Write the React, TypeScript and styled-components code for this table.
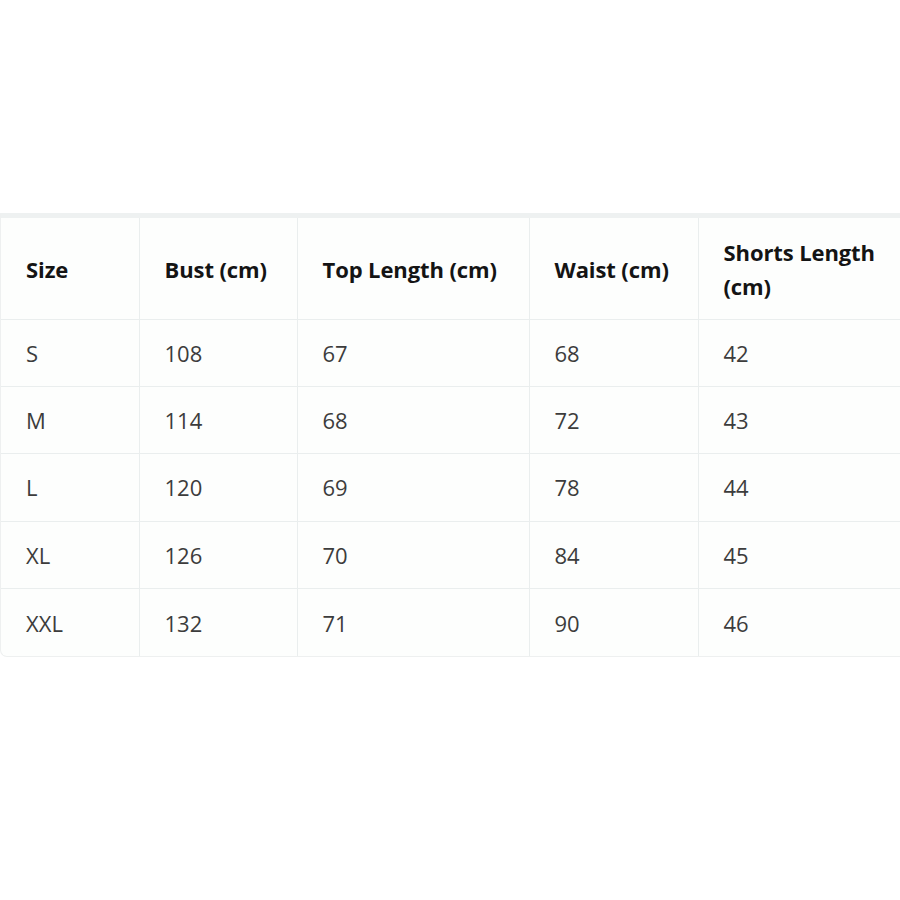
import React from "react";
import styled, { createGlobalStyle } from "styled-components";

const Global = createGlobalStyle`
  html, body {
    margin: 0;
    padding: 0;
    background: #ffffff;
    overflow: hidden;
    width: 900px;
    height: 900px;
  }
  body {
    font-family: "Open Sans", "Noto Sans", sans-serif;
  }
`;

const Page = styled.div`
  width: 900px;
  height: 900px;
  overflow: hidden;
  padding-top: 213px;
  box-sizing: border-box;
`;

const Frame = styled.div`
  width: 920px;
  border-top: 5px solid #eef1f1;
  border-left: 1px solid #eef0f0;
  border-bottom: 1px solid #eef0f0;
  border-radius: 0 0 0 7px;
  overflow: hidden;
  background: #fdfefd;
`;

const Table = styled.table`
  width: 919px;
  border-collapse: collapse;
  table-layout: fixed;
`;

const Col = styled.col<{ $w: number }>`
  width: ${(p) => p.$w}px;
`;

const HeadRow = styled.tr`
  height: 101px;
`;

const BodyRow = styled.tr`
  height: 67.4px;
`;

const Th = styled.th`
  text-align: left;
  vertical-align: middle;
  padding: 1px 10px 0 25px;
  font-size: 22px;
  font-weight: 700;
  line-height: 34px;
  letter-spacing: -0.1px;
  color: #141414;
  border-right: 1px solid #eaeeee;
  border-bottom: 1px solid #eaeeee;
  &:last-child {
    border-right: none;
    padding-right: 30px;
  }
`;

const Td = styled.td`
  padding: 0 10px 0 25px;
  font-size: 22px;
  font-weight: 400;
  color: #3c3c3c;
  vertical-align: middle;
  border-right: 1px solid #eaeeee;
  border-bottom: 1px solid #eaeeee;
  &:last-child {
    border-right: none;
  }
  tr:last-child > & {
    border-bottom: none;
  }
`;

const widths = [138, 158, 232, 169, 222];
const headers = ["Size", "Bust (cm)", "Top Length (cm)", "Waist (cm)", "Shorts Length (cm)"];
const rows = [
  ["S", "108", "67", "68", "42"],
  ["M", "114", "68", "72", "43"],
  ["L", "120", "69", "78", "44"],
  ["XL", "126", "70", "84", "45"],
  ["XXL", "132", "71", "90", "46"],
];

export default function App() {
  return (
    <>
      <Global />
      <Page>
        <Frame>
          <Table>
            <colgroup>
              {widths.map((w, i) => (
                <Col key={i} $w={w} />
              ))}
            </colgroup>
            <thead>
              <HeadRow>
                {headers.map((h) => (
                  <Th key={h}>{h}</Th>
                ))}
              </HeadRow>
            </thead>
            <tbody>
              {rows.map((r) => (
                <BodyRow key={r[0]}>
                  {r.map((c, i) => (
                    <Td key={i}>{c}</Td>
                  ))}
                </BodyRow>
              ))}
            </tbody>
          </Table>
        </Frame>
      </Page>
    </>
  );
}
